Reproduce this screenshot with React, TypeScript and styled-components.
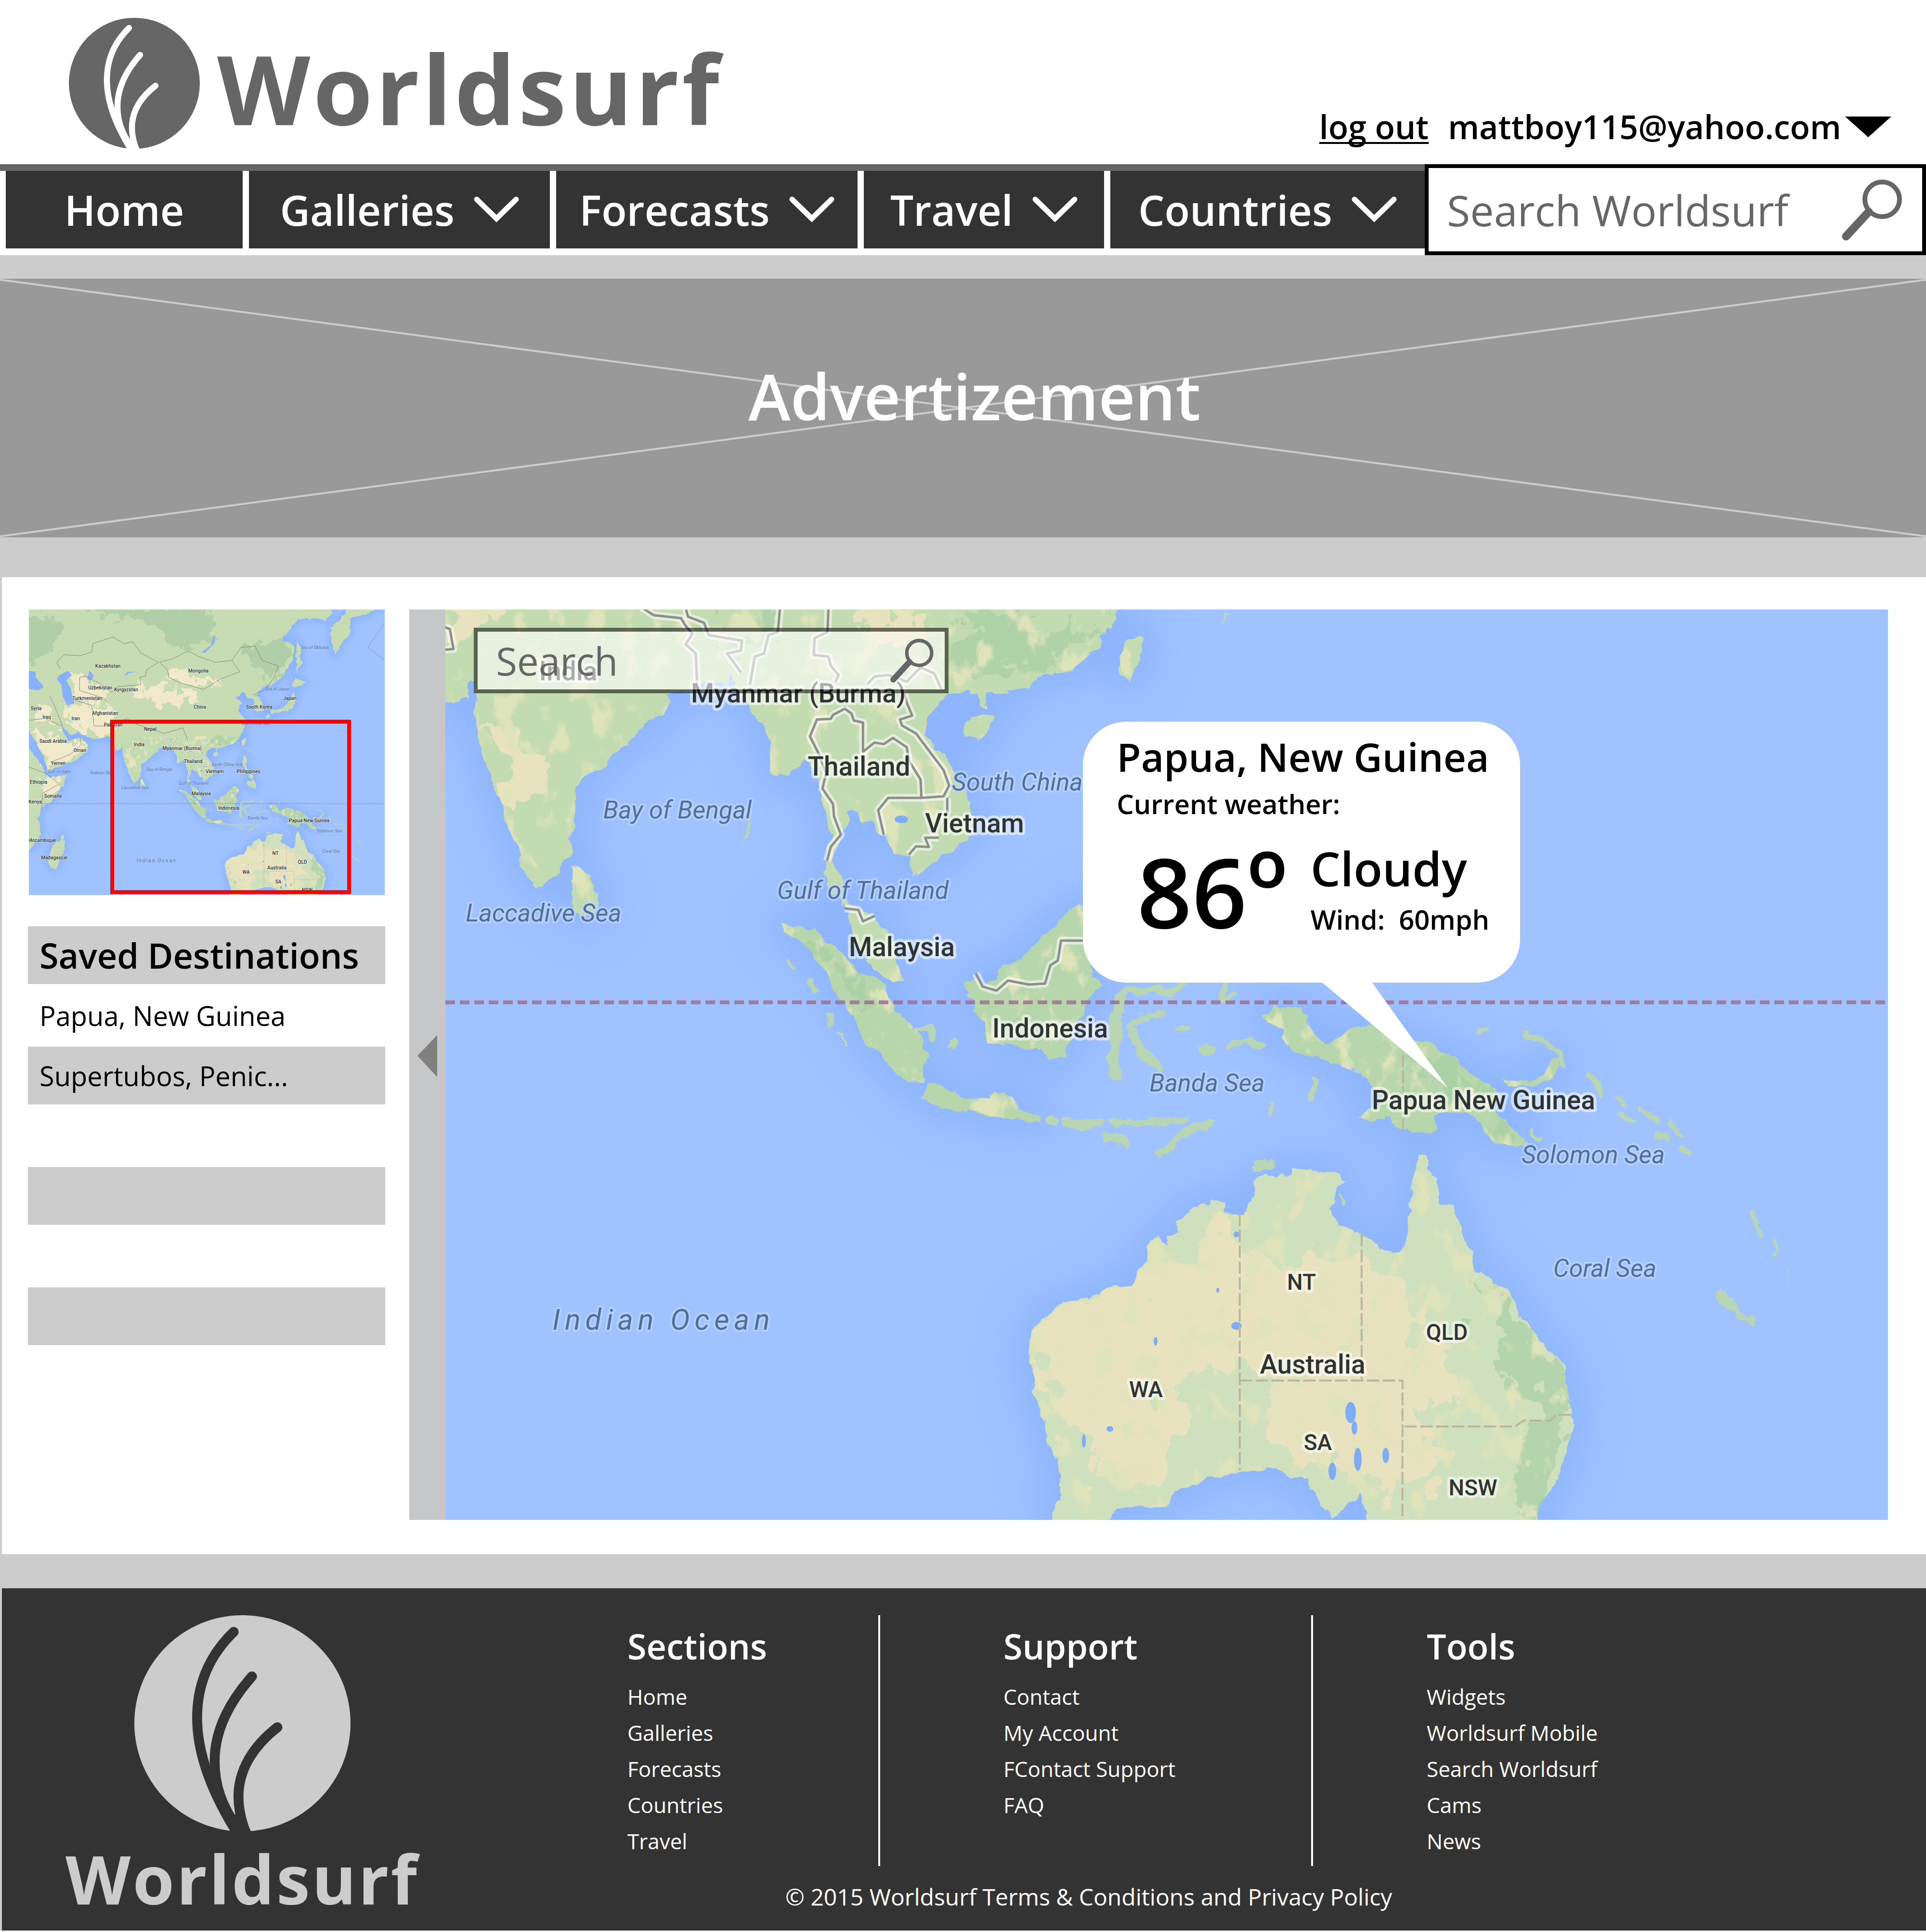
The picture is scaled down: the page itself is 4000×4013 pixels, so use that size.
import React from "react";
import styled, { createGlobalStyle, css } from "styled-components";

const color = {
  ink: "#333333",
  slate: "#666666",
  ad: "#999999",
  band: "#cccccc",
  rail: "#c6c7c9",
  water: "#a0c2ff",
};

const GlobalStyle = createGlobalStyle`
  *, *::before, *::after { box-sizing: border-box; }
  body {
    margin: 0;
    background: #ffffff;
    color: #000000;
    font-family: "Open Sans", "Noto Sans", sans-serif;
  }
  h1, h2, h3, p, ul { margin: 0; padding: 0; font-size: inherit; font-weight: inherit; }
  ul { list-style: none; }
  a { color: inherit; text-decoration: none; }
  button, input { font: inherit; color: inherit; border: 0; background: none; padding: 0; border-radius: 0; }
  svg { display: block; }
`;

/* ---------- header ---------- */

const Header = styled.header`
  display: flex;
  justify-content: space-between;
  align-items: flex-end;
  height: 341px;
  padding: 0 72px 32px 143px;
`;

const Brand = styled.a`
  display: flex;
  align-items: center;
  gap: 36px;
  color: ${color.slate};
`;

const Wordmark = styled.span<{ $size: number; $drop?: number }>`
  padding-top: ${(p) => p.$drop ?? 0}px;
  font-size: ${(p) => p.$size}px;
  font-weight: 700;
  line-height: 1;
  letter-spacing: 0.03em;
`;

const Account = styled.div`
  display: flex;
  align-items: center;
  font-size: 68px;
  line-height: 92px;
  font-weight: 600;
`;

const LogOut = styled.a`
  margin-right: 40px;
  text-decoration: underline;
  text-decoration-thickness: 4px;
  text-underline-offset: 6px;
  text-decoration-skip-ink: none;
`;

const AccountMenu = styled.button`
  display: flex;
  align-items: center;
  gap: 8px;
  font-weight: 600;
`;

/* ---------- navigation ---------- */

const NavBar = styled.div`
  display: grid;
  grid-template-columns: minmax(0, 2959fr) minmax(0, 1041fr);
  height: 189px;
`;

const NavList = styled.nav`
  display: grid;
  grid-template-columns: 492fr 625fr 625fr 499fr 653fr;
  column-gap: 13px;
  padding: 0 0 14px 12px;
  border-top: 14px solid ${color.slate};
`;

const navItem = css`
  display: flex;
  align-items: center;
  justify-content: center;
  gap: 40px;
  background: ${color.ink};
  color: #ffffff;
  font-size: 86px;
  line-height: 120px;
  font-weight: 600;
`;

const NavLink = styled.a`${navItem}`;
const NavButton = styled.button`${navItem}`;

const SiteSearch = styled.form`
  display: flex;
  align-items: center;
  border: 8px solid #000000;
  padding: 0 40px 0 38px;
  color: ${color.slate};
`;

const SearchInput = styled.input<{ $size: number }>`
  flex: 1;
  min-width: 0;
  font-size: ${(p) => p.$size}px;
  line-height: 120px;
  outline: none;
  &::placeholder { color: ${color.slate}; opacity: 1; }
`;

const IconButton = styled.button`
  display: flex;
  color: ${color.slate};
`;

/* ---------- advertisement ---------- */

const AdBand = styled.section`
  background: ${color.band};
  padding: 49px 0 83px;
`;

const Ad = styled.div`
  position: relative;
  display: flex;
  align-items: center;
  justify-content: center;
  height: 537px;
  padding: 0 0 52px 48px;
  background: ${color.ad};
  color: #ffffff;
  font-size: 132px;
  line-height: 176px;
  font-weight: 600;
`;

const AdCross = styled.svg`
  position: absolute;
  inset: 0;
  width: 100%;
  height: 100%;
`;

const AdLabel = styled.span`
  position: relative;
`;

/* ---------- body ---------- */

const Main = styled.main`
  display: grid;
  grid-template-columns: 742px minmax(0, 1fr);
  column-gap: 50px;
  padding: 67px 79px 71px 54px;
  border-left: 4px solid ${color.band};
`;

const Overview = styled.div`
  margin: 0 1px 65px 2px;
`;

const SavedList = styled.ul`
  display: grid;
  gap: 5px;
`;

const SavedRow = styled.li<{ $shaded?: boolean; $title?: boolean }>`
  display: flex;
  align-items: center;
  height: 120px;
  padding: 0 24px;
  background: ${(p) => (p.$shaded ? color.band : "transparent")};
  font-size: ${(p) => (p.$title ? 72 : 56)}px;
  font-weight: ${(p) => (p.$title ? 600 : 400)};
  white-space: nowrap;
`;

const MapPane = styled.div`
  display: grid;
  grid-template-columns: 75px minmax(0, 1fr);
`;

const Rail = styled.button`
  display: flex;
  align-items: center;
  justify-content: center;
  padding-bottom: 36px;
  background: ${color.rail};
`;

const MapFrame = styled.section`
  position: relative;
`;

const MapArt = styled.svg`
  width: 100%;
  height: auto;
  background: ${color.water};
  overflow: hidden;
`;

const MapSearch = styled.form`
  position: absolute;
  left: 59px;
  top: 38px;
  display: flex;
  align-items: center;
  width: 986px;
  height: 136px;
  padding: 0 22px 0 38px;
  border: 8px solid rgba(0, 0, 0, 0.55);
  background: rgba(255, 255, 255, 0.6);
  background-clip: padding-box;
  color: ${color.slate};
`;

const Callout = styled.article`
  position: absolute;
  left: 44.2%;
  top: 12.3%;
  width: 908px;
  height: 542px;
  padding: 20px 0 0 70px;
  border-radius: 90px;
  background: #ffffff;
  font-weight: 600;
  white-space: nowrap;
`;

const CalloutTail = styled.svg`
  position: absolute;
  left: 496px;
  top: 541px;
`;

const Place = styled.h2`
  font-size: 82px;
  line-height: 104px;
`;

const Caption = styled.p`
  font-size: 56px;
  line-height: 92px;
  white-space: pre;
`;

const Reading = styled.div`
  display: flex;
  align-items: flex-start;
  padding: 28px 0 0 42px;
  gap: 48px;
`;

const Temperature = styled.p`
  font-size: 200px;
  line-height: 216px;
`;

const Degree = styled.span`
  font-size: 220px;
  line-height: 0;
`;

const Sky = styled.p`
  font-size: 98px;
  line-height: 120px;
`;

/* ---------- footer ---------- */

const Footer = styled.footer`
  border-top: 71px solid ${color.band};
  border-left: 4px solid ${color.band};
`;

const FooterInner = styled.div`
  display: grid;
  grid-template-columns: 1299fr 521fr 4fr 895fr 4fr 1273fr;
  height: 711px;
  padding-top: 56px;
  grid-template-rows: 521px auto;
  background: ${color.ink};
  color: #ffffff;
`;

const FooterBrand = styled.a`
  grid-row: 1 / 3;
  display: flex;
  flex-direction: column;
  align-items: center;
  justify-self: start;
  gap: 28px;
  padding-left: 132px;
  color: ${color.band};
`;

const Divider = styled.span`
  background: #ffffff;
`;

const Column = styled.section<{ $inset?: number }>`
  padding: 18px 0 0 ${(p) => p.$inset ?? 0}px;
`;

const ColumnTitle = styled.h3`
  font-size: 72px;
  line-height: 92px;
  font-weight: 600;
  margin-bottom: 22px;
`;

const ColumnLink = styled.li`
  font-size: 44px;
  line-height: 75px;
`;

const Legal = styled.p`
  grid-column: 2 / 7;
  padding: 32px 0 0 328px;
  font-size: 48px;
  line-height: 64px;
`;

/* ---------- icons ---------- */

const Emblem = ({ size, cut }: { size: number; cut: string }) => (
  <svg width={size} height={size} viewBox="0 0 272 272" aria-hidden="true">
    <circle cx="136" cy="136" r="136" fill="currentColor" />
    <g fill="none" stroke={cut} strokeWidth="12.5" strokeLinecap="round">
      <path d="M125 21C93 52 79 88 79 129C79 176 98 225 132 278" />
      <path d="M148 77C117 112 101 148 101 184C101 214 110 240 130 268" />
      <path d="M180 141C148 166 131 196 131 228C131 245 135 262 143 280" />
    </g>
    <path d="M127 250L124 272H147L134 250Z" fill={cut} />
  </svg>
);

const Chevron = () => (
  <svg width="94" height="55" viewBox="0 0 94 55" aria-hidden="true">
    <path d="M6 6L47 46L88 6" fill="none" stroke="#ffffff" strokeWidth="11" strokeLinecap="round" />
  </svg>
);

const Magnifier = ({ size }: { size: number }) => (
  <svg width={size} height={size} viewBox="0 0 126 128" aria-hidden="true">
    <circle cx="84" cy="42" r="36" fill="none" stroke="currentColor" strokeWidth="10" />
    <path d="M56 68L9 119" stroke="currentColor" strokeWidth="17" strokeLinecap="round" />
  </svg>
);

/* ---------- cartography ---------- */

type Sheet = { x: number; y: number; sx: number; sy: number };

// Each survey sheet has its own origin and scale; trace() projects it on the map.
const NORTH_WEST: Sheet = { x: -75, y: -17, sx: 0.9566, sy: 0.6378 };
const NORTH_EAST: Sheet = { x: 1275, y: -17, sx: 1.1161, sy: 0.6378 };
const SOUTH_EAST: Sheet = { x: 1125, y: 933, sx: 1.2117, sy: 0.6378 };
const EURASIA: Sheet = { x: -10, y: -7, sx: 0.4847, sy: 0.389 };

const trace = (s: Sheet, points: string, closed = true) =>
  "M" +
  points
    .split(" ")
    .map((p) => {
      const [x, y] = p.split(",").map(Number);
      return `${Math.round((s.x + x * s.sx) * 10) / 10},${Math.round((s.y + y * s.sy) * 10) / 10}`;
    })
    .join("L") +
  (closed ? "Z" : "");

const mainland = [
  trace(NORTH_WEST, "60,332 100,330 125,315 130,265 142,262 142,310 148,400 158,500 180,590 200,650 215,740 238,800 250,880 275,925 290,935 302,905 325,890 340,840 353,830 350,770 365,690 360,600 380,570 420,540 440,500 485,450 515,390 550,375 565,330 560,300 600,290 625,275 640,262 690,270 700,240 715,290 740,345 765,395 785,450 783,560 800,575 825,565 835,540 862,515 875,540 890,600 900,660 910,720 915,780 905,830 900,880 905,930 940,980 960,1050 965,1110 990,1160 1010,1200 1050,1240 1072,1235 1060,1180 1045,1100 1020,1050 1000,1020 970,1000 950,985 940,900 915,850 935,780 945,740 950,685 975,690 980,715 1005,715 1030,760 1045,800 1055,825 1085,830 1090,860 1092,905 1110,885 1145,850 1155,825 1200,790 1222,750 1222,690 1210,620 1185,560 1150,490 1120,430 1125,380 1150,330 1180,300 1210,290 1235,300 1240,345 1255,352 1250,300 1290,300 1340,275 1365,250 1400,240 1440,220 1480,170 1510,110 1530,60 1550,-10 60,-10"),
  trace(NORTH_WEST, "1205,395 1240,370 1270,380 1262,420 1235,455 1205,440"),
  trace(NORTH_WEST, "357,855 375,870 400,930 412,980 400,1020 375,1030 358,1000 352,930"),
  trace(NORTH_EAST, "150,110 157,120 150,190 130,262 115,225 112,180 130,130"),
];

const islands = [
  trace(NORTH_WEST, "808,1048 830,1060 880,1068 905,1110 950,1160 965,1200 1000,1215 1030,1250 1040,1290 1055,1310 1060,1345 1090,1380 1115,1420 1122,1480 1118,1569 1080,1565 1040,1510 1000,1440 970,1380 945,1310 920,1260 905,1200 880,1150 845,1110 815,1075"),
  trace(NORTH_WEST, "1125,1577 1160,1581 1200,1614 1260,1619 1270,1597 1310,1614 1330,1659 1370,1669 1370,1697 1320,1689 1260,1677 1230,1659 1180,1661 1150,1644 1110,1614"),
  trace(NORTH_WEST, "1212,1240 1230,1225 1250,1265 1275,1230 1280,1195 1320,1170 1355,1130 1375,1090 1405,1055 1430,1010 1455,985 1485,1000 1500,1040 1510,1090 1475,1150 1480,1200 1502,1262 1469,1300 1463,1340 1440,1390 1430,1440 1420,1480 1385,1490 1370,1455 1340,1460 1290,1440 1255,1440 1250,1370 1225,1330 1212,1290"),
  trace(SOUTH_EAST, "474,-139 492,-164 529,-169 552,-144 552,-109 566,-69 584,-44 612,-79 626,-104 658,-109 713,-69 768,-39 805,1 825,45 850,75 880,120 868,155 880,190 905,235 930,290 900,285 865,265 845,215 830,180 800,170 765,180 768,235 740,242 715,230 690,195 637,198 655,160 672,150 665,100 645,55 600,20 570,-5 545,-20 520,-25 505,-70 510,-95 480,-120"),
  trace(SOUTH_EAST, "885,70 930,75 955,50 968,5 985,0 975,35 965,70 935,95 895,90"),
];

const australia = trace(SOUTH_EAST, "745,308 752,335 765,380 775,430 778,475 800,480 810,530 818,590 830,640 835,695 860,720 890,755 905,800 915,855 935,880 945,920 970,960 988,1000 992,1060 1000,1120 1005,1180 995,1260 985,1340 970,1400 950,1450 940,1502 935,1600 650,1600 650,1480 640,1410 620,1450 590,1500 575,1450 555,1400 550,1370 520,1360 495,1338 435,1340 400,1360 360,1380 320,1410 310,1460 220,1465 205,1502 190,1600 125,1600 110,1470 125,1440 125,1350 110,1270 100,1200 90,1130 75,1080 85,1060 75,1000 70,960 78,880 90,860 100,835 140,790 175,780 205,748 250,740 260,690 275,655 275,610 295,580 305,610 310,575 330,565 325,535 350,490 370,475 385,452 405,480 412,505 440,510 450,460 460,400 480,380 520,375 520,355 560,365 605,375 612,400 598,420 598,460 585,495 600,535 640,570 665,600 685,632 708,630 720,580 725,500 725,420 735,360");

const chains: [string, number][] = [
  [trace(SOUTH_EAST, "925,-74 967,-44 985,-9 986,15", false), 12],
  [trace(SOUTH_EAST, "1033,58 1045,90 1055,118", false), 14],
  [trace(SOUTH_EAST, "1080,130 1090,150", false), 10],
  [trace(SOUTH_EAST, "1117,162 1148,200", false), 10],
  [trace(SOUTH_EAST, "1090,180 1105,210", false), 12],
  [trace(SOUTH_EAST, "1173,202 1188,255", false), 9],
  [trace(SOUTH_EAST, "1150,248 1165,264", false), 16],
  [trace(SOUTH_EAST, "1190,290 1205,308", false), 12],
  [trace(SOUTH_EAST, "1312,502 1318,535", false), 14],
  [trace(SOUTH_EAST, "1323,548 1331,577", false), 9],
  [trace(SOUTH_EAST, "1348,590 1350,638", false), 6],
  [trace(SOUTH_EAST, "1253,758 1275,810 1313,860", false), 14],
  [trace(SOUTH_EAST, "1370,690 1373,730", false), 5],
  [trace(SOUTH_EAST, "295,310 318,275 345,232 385,207", false), 16],
  [trace(SOUTH_EAST, "205,252 222,255 236,280", false), 18],
  [trace(SOUTH_EAST, "215,205 250,212 290,205 340,198", false), 13],
  [trace(SOUTH_EAST, "105,198 115,200", false), 14],
  [trace(SOUTH_EAST, "133,205 160,215 195,208", false), 18],
  [trace(SOUTH_EAST, "560,70 558,122", false), 14],
  [trace(SOUTH_EAST, "490,150 483,185", false), 10],
  [trace(SOUTH_EAST, "462,348 485,346", false), 22],
  [trace(SOUTH_EAST, "610,445 612,470", false), 8],
  [trace(SOUTH_EAST, "930,235 950,262", false), 8],
  [trace(NORTH_EAST, "116,1285 104,1340 104,1420 100,1500 106,1552", false), 22],
  [trace(NORTH_EAST, "108,1290 130,1262 208,1272 232,1245", false), 16],
  [trace(NORTH_EAST, "125,1385 155,1360 190,1340", false), 15],
  [trace(NORTH_EAST, "132,1400 150,1450 158,1480 182,1512", false), 20],
  [trace(NORTH_EAST, "308,1245 302,1300 325,1282", false), 13],
  [trace(NORTH_EAST, "318,1448 350,1438 378,1452", false), 14],
  [trace(NORTH_EAST, "270,1462 282,1462", false), 20],
  [trace(NORTH_EAST, "220,1388 240,1386", false), 8],
  [trace(NORTH_EAST, "780,1400 798,1398", false), 8],
  [trace(NORTH_EAST, "303,70 312,42", false), 5],
  [trace(NORTH_WEST, "820,1170 838,1195", false), 8],
  [trace(NORTH_WEST, "868,1242 882,1268", false), 12],
  [trace(NORTH_WEST, "912,1350 918,1382", false), 8],
  [trace(NORTH_WEST, "935,1405 955,1450", false), 5],
  [trace(NORTH_WEST, "1105,1390 1128,1390 1135,1430", false), 12],
  [trace(NORTH_WEST, "1180,1432 1180,1446", false), 15],
  [trace(NORTH_WEST, "738,700 733,768", false), 6],
];

const borders = [
  "805,20 800,100 780,110 770,170 750,180 745,225 740,270",
  "910,20 908,100 880,120 878,175 910,180 915,210 932,240 925,262",
  "505,20 530,45 590,55 600,80 615,105 600,140 622,170 625,270",
  "600,20 605,50 640,70 650,110 722,128 720,160 690,170 705,200 720,232",
  "995,270 1010,245 1040,240 1080,262 1110,215 1140,235 1155,285",
  "1075,300 1080,330 1092,372 1065,385 1070,405 1100,430 1130,490 1160,550 1172,600 1160,635 1112,640",
  "945,350 920,370 915,383 885,385 870,440 890,500 905,560 897,610 920,660 922,700 937,760 915,800 907,845",
  "945,350 960,365 965,388 985,395 985,490 1010,460 1030,465 1050,445 1080,475 1085,520 1110,580 1112,640 1040,640 1018,680 1030,760",
  "1168,640 1168,690",
  "1150,770 1120,770 1128,800 1100,798 1085,825",
  "945,1000 975,1005 985,1042 1010,1025",
  "1230,1212 1245,1255 1275,1268 1300,1235 1345,1248 1380,1245 1392,1185 1408,1170 1415,1105 1470,1105",
  "78,85 88,90 96,155 76,158",
].map((p) => trace(NORTH_WEST, p, false));

const stateLines = [
  "433,505 433,1340",
  "642,570 642,1048",
  "433,1048 712,1048 712,1600",
  "715,1198 905,1198 920,1178 965,1180 975,1160 1005,1160",
  "713,-65 713,230",
].map((p) => trace(SOUTH_EAST, p, false));

const desert = [
  trace(SOUTH_EAST, "400,560 370,620 350,660 270,660 255,740 140,800 90,850 80,960 100,1080 130,1180 180,1300 200,1400 300,1380 330,1270 310,1150 330,1060 430,1000 500,1040 470,1200 500,1330 560,1320 640,1340 690,1440 740,1400 780,1280 760,1180 800,1120 790,960 800,860 720,880 700,740 640,640 560,640 500,660"),
  trace(NORTH_WEST, "150,420 200,400 250,500 300,560 290,640 240,640 180,520"),
  trace(NORTH_WEST, "60,-10 240,-10 200,40 130,80 110,140 60,140"),
  trace(NORTH_WEST, "960,40 1060,30 1120,70 1100,130 1010,140 960,90"),
];

const forest = [
  trace(SOUTH_EAST, "830,700 905,800 940,920 988,1010 1000,1180 985,1340 940,1500 900,1500 930,1300 950,1150 900,1060 850,980 860,900 890,860"),
  trace(SOUTH_EAST, "680,-60 768,-35 825,50 905,235 925,290 880,270 830,160 760,60"),
  trace(NORTH_WEST, "640,40 780,60 740,200 660,160"),
  trace(NORTH_WEST, "1200,60 1480,40 1440,180 1260,240 1160,190"),
  trace(NORTH_WEST, "820,1060 880,1075 960,1210 1000,1300 980,1360 930,1250"),
];

const lakes: [number, number, number, number][] = [
  [1643, 1488, 11, 8], [1880, 1668, 11, 22], [1888, 1700, 6, 14], [1895, 1765, 8, 24],
  [1953, 1757, 7, 16], [1842, 1790, 8, 18], [1380, 1702, 7, 6], [1326, 1727, 4, 14],
  [1475, 1520, 4, 9], [1643, 1298, 6, 6], [1604, 1414, 3, 5], [947, 436, 14, 8],
];

const Terrain = ({ id, detailed }: { id: string; detailed: boolean }) => (
  <>
    <g fill="#8ab2fd" stroke="#8ab2fd" strokeWidth="70" strokeLinejoin="round" filter={`url(#${id}-shelf)`} opacity="0.85">
      {mainland.concat(islands, australia).map((d) => <path key={d} d={d} />)}
    </g>
    <g filter={detailed ? `url(#${id}-coast)` : undefined}>
      <g fill="#c3dbb0">
        {mainland.map((d) => <path key={d} d={d} />)}
      </g>
      <g fill="#b7d6ac">
        {islands.map((d) => <path key={d} d={d} />)}
      </g>
      <path d={australia} fill="#cee0bd" />
      <g fill="none" stroke="#b9d6b4" strokeLinecap="round" strokeLinejoin="round">
        {chains.map(([d, w]) => <path key={d} d={d} strokeWidth={w} />)}
      </g>
    </g>
    <g clipPath={`url(#${id}-land)`}>
      <g fill="#e8e2be" filter={`url(#${id}-patch)`}>
        {desert.map((d) => <path key={d} d={d} />)}
      </g>
      <g fill="#a9cfa6" opacity="0.7" filter={`url(#${id}-patch)`}>
        {forest.map((d) => <path key={d} d={d} />)}
      </g>
      <rect x="0" y="0" width="2996" height="1891" filter={`url(#${id}-grain)`} />
    </g>
    <g fill="#7dacf8">
      {lakes.map(([cx, cy, rx, ry]) => <ellipse key={`${cx}-${cy}`} cx={cx} cy={cy} rx={rx} ry={ry} />)}
    </g>
    <g fill="none" stroke="#b9b6a0" strokeWidth="4" strokeDasharray="26 7">
      {stateLines.map((d) => <path key={d} d={d} />)}
    </g>
    <g fill="none" stroke="#ffffff" strokeOpacity="0.55" strokeWidth="16" strokeLinejoin="round">
      {borders.map((d) => <path key={d} d={d} />)}
    </g>
    <g fill="none" stroke="#8d8f8a" strokeWidth="5" strokeLinejoin="round">
      {borders.map((d) => <path key={d} d={d} />)}
    </g>
  </>
);

const TerrainDefs = ({ id }: { id: string }) => (
  <defs>
    <clipPath id={`${id}-land`}>
      <path d={mainland.concat(islands, australia).join("")} />
    </clipPath>
    <filter id={`${id}-shelf`} x="-10%" y="-10%" width="120%" height="120%">
      <feGaussianBlur stdDeviation="42" />
    </filter>
    <filter id={`${id}-coast`} x="0" y="0" width="100%" height="100%">
      <feTurbulence type="fractalNoise" baseFrequency="0.035" numOctaves="3" seed="4" />
      <feDisplacementMap in="SourceGraphic" scale="22" xChannelSelector="R" yChannelSelector="G" />
    </filter>
    <filter id={`${id}-patch`} x="-5%" y="-5%" width="110%" height="110%">
      <feTurbulence type="fractalNoise" baseFrequency="0.014" numOctaves="5" seed="9" />
      <feDisplacementMap in="SourceGraphic" scale="170" xChannelSelector="R" yChannelSelector="G" />
    </filter>
    <filter id={`${id}-grain`} x="0" y="0" width="100%" height="100%" colorInterpolationFilters="sRGB">
      <feTurbulence type="fractalNoise" baseFrequency="0.02 0.013" numOctaves="5" seed="21" />
      <feColorMatrix values="0 0 0 0 0.87  0 0 0 0 0.89  0 0 0 0 0.73  7 0 0 0 -3.9" />
    </filter>
  </defs>
);

type Label = { t: string; x: number; y: number; s?: number; start?: boolean };

const LandLabel = styled.text`
  font-family: Roboto, sans-serif;
  font-weight: 500;
  fill: #2e3432;
  stroke: rgba(255, 255, 255, 0.55);
  paint-order: stroke;
  stroke-linejoin: round;
`;

const SeaLabel = styled(LandLabel)`
  font-weight: 400;
  font-style: italic;
  fill: #527097;
  stroke: rgba(190, 214, 255, 0.7);
`;

const OceanLabel = styled(SeaLabel)`
  letter-spacing: 0.16em;
`;

const landLabels: Label[] = [
  { t: "India", x: 255, y: 147 },
  { t: "Myanmar (Burma)", x: 733, y: 193 },
  { t: "Thailand", x: 859, y: 345 },
  { t: "Vietnam", x: 1099, y: 463 },
  { t: "Malaysia", x: 948, y: 720 },
  { t: "Indonesia", x: 1256, y: 889 },
  { t: "Papua New Guinea", x: 2156, y: 1038 },
  { t: "Australia", x: 1801, y: 1587 },
  { t: "NT", x: 1778, y: 1413, s: 46 },
  { t: "QLD", x: 2080, y: 1517, s: 46 },
  { t: "WA", x: 1455, y: 1636, s: 46 },
  { t: "SA", x: 1812, y: 1746, s: 46 },
  { t: "NSW", x: 2134, y: 1840, s: 46 },
];

const seaLabels: Label[] = [
  { t: "Bay of Bengal", x: 482, y: 434 },
  { t: "Laccadive Sea", x: 204, y: 648 },
  { t: "Gulf of Thailand", x: 867, y: 601 },
  { t: "South China Sea", x: 1052, y: 376, start: true },
  { t: "Banda Sea", x: 1582, y: 1001 },
  { t: "Solomon Sea", x: 2384, y: 1150 },
  { t: "Coral Sea", x: 2408, y: 1386 },
];

const Labels = ({ as: Tag, list, size, halo }: { as: typeof LandLabel; list: Label[]; size: number; halo: number }) => (
  <>
    {list.map((l) => (
      <Tag key={l.t} x={l.x} y={l.y} fontSize={l.s ?? size} strokeWidth={halo} textAnchor={l.start ? "start" : "middle"}>
        {l.t}
      </Tag>
    ))}
  </>
);

const RegionMap = () => (
  <MapArt viewBox="0 0 2996 1891" role="img" aria-label="Map of South East Asia and Australia">
    <TerrainDefs id="region" />
    <Terrain id="region" detailed />
    <path d="M0 816H2996" stroke="#9c6b8a" strokeOpacity="0.8" strokeWidth="8" strokeDasharray="20 10" />
    <Labels as={LandLabel} list={landLabels} size={55} halo={12} />
    <Labels as={SeaLabel} list={seaLabels} size={52} halo={8} />
    <OceanLabel x="453" y="1496" fontSize="61" strokeWidth="8" textAnchor="middle">Indian Ocean</OceanLabel>
  </MapArt>
);

const eurasia = [
  "10,10 1310,10 1320,40 1290,75 1245,65 1175,70 1150,110 1100,180 1140,195 1160,220 1150,290 1110,370 1060,425 1040,420 1010,450 985,475 1010,490 1030,545 1025,560 990,560 985,500 960,495 945,460 905,490 940,515 920,530 925,570 950,610 945,650 925,690 600,700 430,700 410,765 390,765 385,720 360,700 300,708 245,685 240,670 200,690 160,635 165,665 190,720 240,700 275,740 270,775 230,820 160,850 100,880 95,840 60,750 10,640",
  "1540,10 1495,20 1460,50 1400,60 1395,150 1360,200 1330,262 1315,180 1315,120 1345,80 1375,40 1385,10",
  "10,740 40,790 75,850 95,900 110,915 185,900 165,960 120,1040 75,1080 60,1130 70,1180 70,1240 10,1315",
  "165,1220 178,1260 160,1340 140,1400 110,1400 105,1360 115,1290 150,1255",
  "1160,380 1205,405 1190,425 1150,430",
  "1155,455 1165,490 1150,550 1110,565 1060,575 1050,560 1100,545 1130,520 1145,480",
  "1045,575 1060,590 1045,605 1038,585",
  "1170,190 1185,220 1180,270 1195,300 1175,330 1170,360 1165,300 1168,240",
  "940,800 955,810 950,850 965,880 940,860 930,830",
  "955,940 985,925 1000,965 985,978 960,960",
  "965,895 985,905 978,925 962,915",
].map((p) => trace(EURASIA, p));

const drylands = [
  "20,650 160,700 190,730 275,740 260,780 150,850 95,860",
  "170,540 290,520 390,560 370,690 250,680 180,610",
  "190,350 260,380 370,470 290,510 210,500",
  "450,440 560,420 700,450 760,500 620,530 470,500",
  "600,340 800,400 850,430 720,420 620,380",
  "60,520 120,540 130,620 40,600",
  "90,910 180,900 120,1030 60,980",
].map((p) => trace(EURASIA, p));

const woodlands = [
  "200,10 800,10 820,180 700,230 620,200 560,90 400,60",
  "930,220 1100,180 1150,240 1080,400 1000,330",
  "10,40 180,90 100,250 20,300",
].map((p) => trace(EURASIA, p));

const inlandWater = [
  "150,370 190,345 205,370 180,395 200,440 215,520 185,530 165,480 160,420 140,390",
  "10,345 50,350 50,380 85,430 60,450 10,440",
  "280,345 300,370 285,400 270,390",
  "820,155 815,200 775,250 760,247 800,210 812,160",
  "430,375 440,352 490,350 450,358",
].map((p) => trace(EURASIA, p));

const frontiers = [
  "155,335 140,300 170,260 240,265 290,245 295,200 380,165 430,200 465,190 500,250 575,300 525,340 520,375 495,380 500,420 400,430 375,460 320,410 265,375 238,380 238,450 340,490 360,520",
  "580,300 640,280 700,240 760,275 820,300 890,290 925,350 840,390 770,445 670,410 620,380 615,340 580,300",
  "890,290 930,220 990,215 1020,290 1090,320 1070,380 1040,440 980,475",
  "210,500 290,530 300,640 360,640 440,600 480,630 600,680 680,650 700,710",
  "110,480 130,530 165,640",
  "21,610 90,600 160,640",
  "120,830 200,790 245,740 240,700",
  "21,860 90,890 150,950 80,1000 75,1080",
].map((p) => trace(EURASIA, p, false));

const place = (t: string, x: number, y: number): Label => ({
  t,
  x: Math.round(EURASIA.x + x * EURASIA.sx),
  y: Math.round(EURASIA.y + y * EURASIA.sy),
});

const overviewLand = [
  place("Kazakhstan", 359, 328), place("Mongolia", 747, 356), place("Uzbekistan", 325, 446),
  place("Kyrgyzstan", 438, 454), place("Turkmenistan", 270, 500), place("China", 753, 548),
  place("Afghanistan", 346, 581), place("Iran", 220, 609), place("Iraq", 97, 602), place("Syria", 52, 556),
  place("Pakistan", 382, 642), place("Saudi Arabia", 123, 731), place("Oman", 240, 779), place("Yemen", 147, 849),
  place("Ethiopia", 61, 948), place("Somalia", 123, 1024), place("Kenya", 48, 1055), place("Mozambique", 77, 1259),
  place("Madagascar", 131, 1351), place("South Korea", 1006, 547), place("Japan", 1139, 500), place("Nepal", 540, 667),
  place("India", 493, 747), place("Myanmar (Burma)", 676, 768), place("Thailand", 725, 839), place("Vietnam", 817, 893),
  place("Philippines", 962, 893), place("Malaysia", 759, 1010), place("Indonesia", 876, 1087),
  place("Papua New Guinea", 1221, 1155), place("Australia", 1084, 1407), place("NT", 1076, 1329),
  place("QLD", 1192, 1375), place("WA", 952, 1429), place("SA", 1089, 1481), place("NSW", 1213, 1524),
];

const overviewSea = [
  place("Sea of Okhotsk", 1246, 229), place("Sea of Japan", 1085, 449), place("East China Sea", 992, 635),
  place("Gulf of Aden", 150, 892), place("Arabian Sea", 330, 897), place("Bay of Bengal", 580, 878),
  place("South China Sea", 868, 853), place("Gulf of Thailand", 727, 955), place("Laccadive Sea", 474, 977),
  place("Banda Sea", 1001, 1139), place("Solomon Sea", 1308, 1207), place("Coral Sea", 1317, 1315),
];

const OverviewMap = () => (
  <MapArt viewBox="0 0 739 593" role="img" aria-label="Overview map with the visible region marked">
    <TerrainDefs id="overview" />
    <defs>
      <clipPath id="eurasia-land"><path d={eurasia.join("")} /></clipPath>
      <filter id="eurasia-shelf"><feGaussianBlur stdDeviation="8" /></filter>
      <filter id="eurasia-patch" x="-5%" y="-5%" width="110%" height="110%">
        <feTurbulence type="fractalNoise" baseFrequency="0.05" numOctaves="4" seed="7" />
        <feDisplacementMap in="SourceGraphic" scale="48" xChannelSelector="R" yChannelSelector="G" />
      </filter>
      <filter id="eurasia-coast">
        <feTurbulence type="fractalNoise" baseFrequency="0.1" numOctaves="3" seed="5" />
        <feDisplacementMap in="SourceGraphic" scale="8" xChannelSelector="R" yChannelSelector="G" />
      </filter>
    </defs>
    <g fill="#8ab2fd" stroke="#8ab2fd" strokeWidth="12" filter="url(#eurasia-shelf)">
      {eurasia.map((d) => <path key={d} d={d} />)}
    </g>
    <g transform="translate(183 257) scale(0.185 0.179)">
      <Terrain id="overview" detailed={false} />
    </g>
    <g fill="#c8dcb4" filter="url(#eurasia-coast)">
      {eurasia.map((d) => <path key={d} d={d} />)}
    </g>
    <g clipPath="url(#eurasia-land)">
      <g fill="#f1e9c9" filter="url(#eurasia-patch)">{drylands.map((d) => <path key={d} d={d} />)}</g>
      <g fill="#a8cba4" opacity="0.75" filter="url(#eurasia-patch)">{woodlands.map((d) => <path key={d} d={d} />)}</g>
    </g>
    <g fill="#86b0fa">{inlandWater.map((d) => <path key={d} d={d} />)}</g>
    <g fill="none" stroke="#84867f" strokeWidth="1">{frontiers.map((d) => <path key={d} d={d} />)}</g>
    <path d="M26 403H739M739 28L704 79L739 105" fill="none" stroke="#8a6f9e" strokeWidth="1" strokeDasharray="3 2" />
    <Labels as={LandLabel} list={overviewLand} size={10} halo={2} />
    <Labels as={SeaLabel} list={overviewSea} size={9} halo={1} />
    <OceanLabel x="265" y="525" fontSize="11" strokeWidth="1" textAnchor="middle">Indian Ocean</OceanLabel>
    <rect x="173" y="233" width="492" height="354" fill="none" stroke="#ff0000" strokeWidth="8" />
  </MapArt>
);

/* ---------- content ---------- */

const menus = ["Galleries", "Forecasts", "Travel", "Countries"];

const saved = ["Papua, New Guinea", "Supertubos, Penic...", "", "", "", ""];

const sections = ["Home", "Galleries", "Forecasts", "Countries", "Travel"];
const support = ["Contact", "My Account", "FContact Support", "FAQ"];
const tools = ["Widgets", "Worldsurf Mobile", "Search Worldsurf", "Cams", "News"];

const FooterColumn = ({ title, links, inset }: { title: string; links: string[]; inset?: number }) => (
  <Column $inset={inset}>
    <ColumnTitle>{title}</ColumnTitle>
    <ul>
      {links.map((l) => (
        <ColumnLink key={l}><a href="#top">{l}</a></ColumnLink>
      ))}
    </ul>
  </Column>
);

export default function App() {
  return (
    <div id="top">
      <GlobalStyle />
      <Header>
        <Brand href="#top">
          <Emblem size={272} cut="#ffffff" />
          <Wordmark $size={200} $drop={20}>Worldsurf</Wordmark>
        </Brand>
        <Account>
          <LogOut href="#top">log out</LogOut>
          <AccountMenu type="button">
            mattboy115@yahoo.com
            <svg width="96" height="43" viewBox="0 0 96 43" aria-hidden="true">
              <path d="M0 0H96L48 43Z" />
            </svg>
          </AccountMenu>
        </Account>
      </Header>

      <NavBar>
        <NavList>
          <NavLink href="#top">Home</NavLink>
          {menus.map((m) => (
            <NavButton key={m} type="button">{m}<Chevron /></NavButton>
          ))}
        </NavList>
        <SiteSearch role="search" onSubmit={(e) => e.preventDefault()}>
          <SearchInput $size={88} type="text" aria-label="Search Worldsurf" placeholder="Search Worldsurf" />
          <IconButton type="submit" aria-label="Submit search"><Magnifier size={128} /></IconButton>
        </SiteSearch>
      </NavBar>

      <AdBand>
        <Ad>
          <AdCross viewBox="0 0 4000 536" preserveAspectRatio="none" aria-hidden="true">
            <path d="M0 2L4000 534M0 534L4000 2" stroke="#cccccc" strokeWidth="4" />
          </AdCross>
          <AdLabel>Advertizement</AdLabel>
        </Ad>
      </AdBand>

      <Main>
        <aside>
          <Overview><OverviewMap /></Overview>
          <SavedList>
            <SavedRow $shaded $title><h2>Saved Destinations</h2></SavedRow>
            {saved.map((s, i) => (
              <SavedRow key={i} $shaded={i % 2 === 1}>{s && <a href="#top">{s}</a>}</SavedRow>
            ))}
          </SavedList>
        </aside>
        <MapPane>
          <Rail type="button" aria-label="Collapse sidebar">
            <svg width="41" height="87" viewBox="0 0 41 87" aria-hidden="true">
              <path d="M41 0V87L0 43Z" fill="#808080" />
            </svg>
          </Rail>
          <MapFrame>
            <RegionMap />
            <MapSearch role="search" onSubmit={(e) => e.preventDefault()}>
              <SearchInput $size={80} type="text" aria-label="Search the map" placeholder="Search" />
              <IconButton type="submit" aria-label="Search map"><Magnifier size={92} /></IconButton>
            </MapSearch>
            <Callout>
              <CalloutTail width="262" height="220" viewBox="0 0 262 220" aria-hidden="true">
                <path d="M0 0H104L262 220Z" fill="#ffffff" />
              </CalloutTail>
              <Place>Papua, New Guinea</Place>
              <Caption>Current weather:</Caption>
              <Reading>
                <Temperature>86<Degree>º</Degree></Temperature>
                <div>
                  <Sky>Cloudy</Sky>
                  <Caption>{"Wind:  60mph"}</Caption>
                </div>
              </Reading>
            </Callout>
          </MapFrame>
        </MapPane>
      </Main>

      <Footer>
        <FooterInner>
          <FooterBrand href="#top">
            <Emblem size={449} cut={color.ink} />
            <Wordmark $size={140}>Worldsurf</Wordmark>
          </FooterBrand>
          <FooterColumn title="Sections" links={sections} />
          <Divider />
          <FooterColumn title="Support" links={support} inset={256} />
          <Divider />
          <FooterColumn title="Tools" links={tools} inset={236} />
          <Legal>© 2015 Worldsurf Terms &amp; Conditions and Privacy Policy</Legal>
        </FooterInner>
      </Footer>
    </div>
  );
}
